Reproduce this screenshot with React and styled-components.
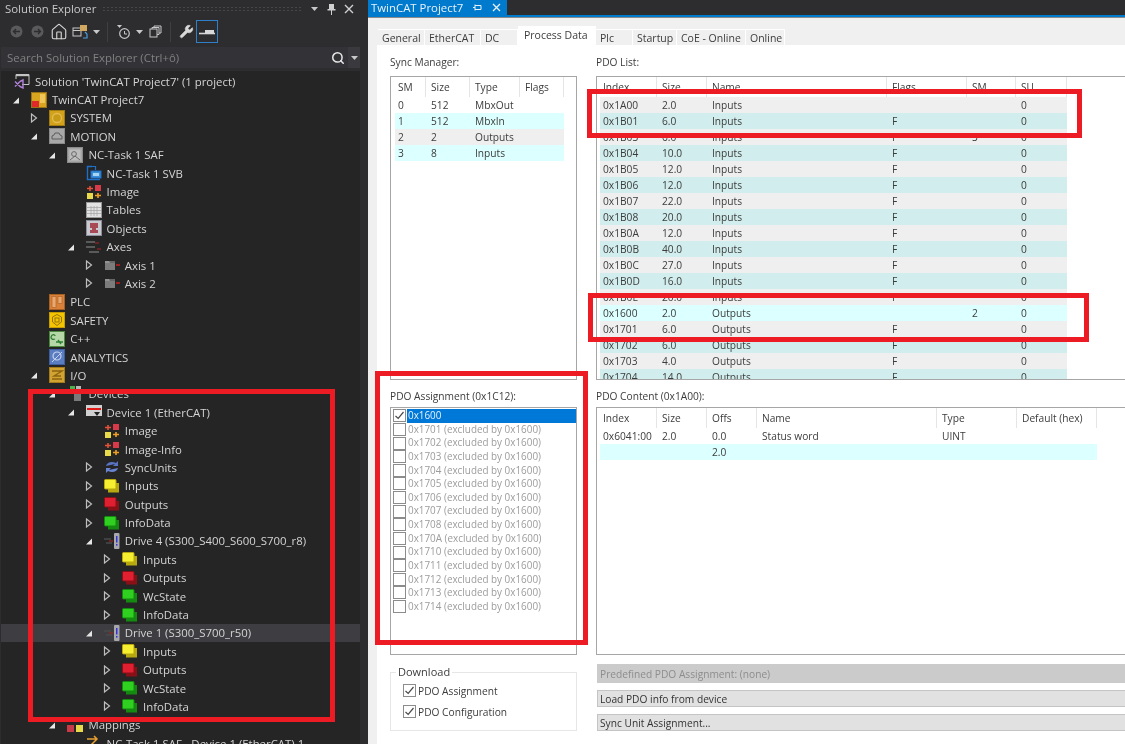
import React from "react";
import styled, { createGlobalStyle } from "styled-components";
import { House, Wrench, Search } from "lucide-react";

const Global = createGlobalStyle`
  html, body { margin: 0; padding: 0; height: 100%; background: #252526; overflow: hidden; }
  #root { height: 100%; }
  * { box-sizing: border-box; }
`;

const Page = styled.div`
  position: relative; width: 1125px; height: 744px; display: flex; overflow: hidden;
  filter: blur(0.35px);
`;

/* ---------- Left: Solution Explorer ---------- */
const Explorer = styled.aside`
  width: 368px; flex: none; display: flex; flex-direction: column; background: #2d2d30;
  font-family: "Open Sans", "Noto Sans", sans-serif; font-size: 11.4px; color: #d4d4d4;
`;
const TitleBar = styled.div`
  height: 17px; display: flex; align-items: center; padding: 0 13px 0 5px; color: #c8c8c8;
`;
const Grip = styled.div`
  flex: 1; height: 5px; margin: 0 2px 0 6px;
  background-image: radial-gradient(#47474b 0.7px, transparent 0.8px); background-size: 4px 3px;
`;
const TitleBtn = styled.span`
  width: 13px; height: 14px; display: flex; align-items: center; justify-content: center; margin-left: 4px; flex: none;
`;
const Toolbar = styled.div`
  height: 29px; display: flex; align-items: center; padding: 0 0 0 6px; background: #2d2d30;
`;
const ToolBtn = styled.div`
  width: ${p => p.$w || 21}px; height: 23px; flex: none; display: flex; align-items: center; justify-content: center;
  border: 1px solid ${p => (p.$active ? "#2f7fc9" : "transparent")};
  color: ${p => (p.$dim ? "#5a5a5c" : "#c8c8c8")};
`;
const ToolSep = styled.div`
  width: 1px; height: 20px; background: #3f3f42; margin: 0 5px 0 4px; flex: none;
`;
const SearchBar = styled.div`
  height: 21px; margin: 1px 8px 0 1px; background: #333337; display: flex; align-items: center;
  padding-left: 6px; color: #808082; flex: none;
`;
const SearchText = styled.span` flex: 1; `;
const SearchBtn = styled.span`
  width: 20px; height: 100%; display: flex; align-items: center; justify-content: center; color: #e8e8e8;
`;
const SearchCaret = styled.span`
  width: 12px; height: 100%; background: #3a3a3e; display: flex; align-items: center; justify-content: center;
`;
const Tree = styled.div`
  flex: 1; background: #252526; margin: 3px 8px 0 1px; padding-top: 1px; overflow: hidden;
  width: 359px;
`;
const Row = styled.div`
  height: 18.4px; display: flex; align-items: center; white-space: nowrap;
  padding-left: ${p => (p.$d === 0 ? 13 : 11 + (p.$d - 1) * 18.2)}px;
  background: ${p => (p.$sel ? "#3e3e42" : "transparent")};
`;
const ArrowSlot = styled.span`
  width: 19px; flex: none; display: flex; align-items: center;
`;
const IconSlot = styled.span`
  width: 16px; height: 16px; flex: none; display: block; margin-right: 5px;
`;

const Arrow = ({ open }) => (
  <svg width="8" height="10" viewBox="0 0 8 10">
    {open ? <path d="M1 8.5 L7 2.5 V8.5 Z" fill="#e6e6e6" />
      : <path d="M1.5 1 L6.5 5 L1.5 9 Z" fill="none" stroke="#bdbdbd" strokeWidth="1.2" />}
  </svg>
);

const Caret = () => (
  <svg width="7" height="4" viewBox="0 0 7 4"><path d="M0 0H7L3.5 4Z" fill="#c8c8c8" /></svg>
);

const Stack = ({ a, b }) => (
  <svg viewBox="0 0 16 16" width="16" height="16">
    <rect x="4" y="5" width="11" height="9.5" fill={b} />
    <rect x="0.5" y="1.5" width="11.5" height="9.5" rx="1" fill={a} stroke={b} strokeWidth="1" />
  </svg>
);
const Tile = ({ bg, edge, children }) => (
  <svg viewBox="0 0 16 16" width="16" height="16">
    <rect x="0.5" y="0.5" width="15" height="15" fill={bg} stroke={edge} />
    {children}
  </svg>
);
const ImageIcon = () => (
  <svg viewBox="0 0 16 16" width="16" height="16">
    <rect x="9" y="1" width="6" height="6" fill="#d83a4a" />
    <rect x="1" y="9" width="6" height="6" fill="#e8da4a" />
    <path d="M1 4.5H7M4 2V7" stroke="#e8503a" strokeWidth="1.6" />
    <path d="M9 11.5H15M12 9V14" stroke="#f0a020" strokeWidth="1.6" />
  </svg>
);

const icons = {
  solution: (
    <svg viewBox="0 0 16 16" width="16" height="16">
      <path d="M2 6V1.5H15V11.5H8" fill="none" stroke="#c4c4c4" strokeWidth="1" />
      <path d="M2 2.5H15" stroke="#c4c4c4" strokeWidth="1.4" />
      <path d="M1 8.5L6 13.5M1 13.5L6 8.5M6 8.5L9 7V15L6 13.5" fill="none" stroke="#b180d7" strokeWidth="1.4" />
    </svg>
  ),
  project: (
    <Tile bg="#d9a520" edge="#9a7414">
      <rect x="9" y="2" width="5" height="9" fill="#eec65a" />
      <rect x="1" y="9" width="7" height="6" fill="#e02a2a" />
    </Tile>
  ),
  system: (
    <Tile bg="#d3a21a" edge="#a17c10">
      <circle cx="8" cy="8" r="4.5" fill="#c79a18" stroke="#e2bd50" strokeWidth="1.3" />
    </Tile>
  ),
  motion: (
    <Tile bg="#a8a8a8" edge="#8a8a8a">
      <path d="M3 11V8L5 7L6 5H10L11 7L13 8V11Z" fill="none" stroke="#5c5c5c" strokeWidth="1" />
    </Tile>
  ),
  nc: (
    <Tile bg="#a5a5a5" edge="#8a8a8a">
      <rect x="2.5" y="2.5" width="11" height="11" fill="#bdbdbd" />
      <circle cx="7" cy="7" r="2.4" fill="none" stroke="#6a6a6a" />
      <path d="M3 13L8 9L13 13" fill="none" stroke="#6a6a6a" />
    </Tile>
  ),
  svb: (
    <svg viewBox="0 0 16 16" width="16" height="16">
      <path d="M6 1.5H1.5V14.5H14" fill="none" stroke="#1e6fc8" strokeWidth="1.4" />
      <path d="M6 1.5H9.5V5" fill="none" stroke="#1e6fc8" strokeWidth="1.2" />
      <rect x="5" y="6" width="10" height="7" fill="#3a8fd8" stroke="#1e6fc8" />
      <rect x="7" y="8" width="6" height="3" fill="#a8d4f4" />
    </svg>
  ),
  image: <ImageIcon />,
  tables: (
    <Tile bg="#e2e2e2" edge="#9a9a9a">
      <path d="M1 5.5H15M1 8.5H15M1 11.5H15M5 4V14M8 4V14M11 4V14" stroke="#a8a8a8" strokeWidth="0.8" />
    </Tile>
  ),
  objects: (
    <Tile bg="#c9c9d2" edge="#8f8f99">
      <path d="M4 3H12V8H10V10H12V13H4V10H6V8H4Z" fill="#a84a56" />
    </Tile>
  ),
  axes: (
    <svg viewBox="0 0 16 16" width="16" height="16">
      <path d="M0 3H9M0 8H9M3 13H13" stroke="#5a5a5a" strokeWidth="2" />
      <path d="M9 4H13M11 10H15" stroke="#b02020" strokeWidth="1.2" />
    </svg>
  ),
  axis: (
    <svg viewBox="0 0 16 16" width="16" height="16">
      <path d="M1 4H5L6 6H11V13H1Z" fill="#7c7c7c" />
      <path d="M1 5H11" stroke="#a8a8a8" />
      <path d="M12 8H16" stroke="#d02020" strokeWidth="1.4" />
    </svg>
  ),
  plc: (
    <Tile bg="#d9803a" edge="#a86020">
      <rect x="3" y="2.5" width="4" height="11" fill="#e8a870" stroke="#a86020" strokeWidth="0.6" />
      <rect x="9" y="2.5" width="4" height="7" fill="#e8a870" stroke="#a86020" strokeWidth="0.6" />
    </Tile>
  ),
  safety: (
    <Tile bg="#f5c400" edge="#c79c00">
      <path d="M8 2.5L12.5 5V10L8 13.5L3.5 10V5Z" fill="none" stroke="#96740a" />
      <rect x="6" y="6" width="4" height="4" fill="none" stroke="#96740a" />
    </Tile>
  ),
  cpp: (
    <Tile bg="#b6d8a8" edge="#4a8a3a">
      <path d="M2 6C3 3 6 3 6 5M2 6C2 8 4 9 6 8M7 11H14M9 9L12 13" fill="none" stroke="#2e7d32" strokeWidth="1.3" />
    </Tile>
  ),
  analytics: (
    <Tile bg="#5a7cc0" edge="#3e5ea0">
      <circle cx="8" cy="7" r="4" fill="none" stroke="#c4d2f0" strokeWidth="1.2" />
      <path d="M3 13L13 3" stroke="#c4d2f0" strokeWidth="1" />
    </Tile>
  ),
  io: (
    <Tile bg="#d2a232" edge="#a67c18">
      <path d="M3 4H13L5 9H12M3 12H13" fill="none" stroke="#8c6410" strokeWidth="1.4" />
    </Tile>
  ),
  devices: (
    <svg viewBox="0 0 16 16" width="16" height="16">
      <rect x="3" y="0" width="5" height="5" fill="#50b050" />
      <rect x="9" y="0" width="5" height="5" fill="#b8b8b8" />
      <rect x="7" y="7" width="7" height="8" fill="#7a7a7a" />
    </svg>
  ),
  device: (
    <svg viewBox="0 0 16 16" width="16" height="16">
      <rect x="0" y="1" width="16" height="11" fill="#d0d0d0" />
      <rect x="1" y="4" width="14" height="2" fill="#e01818" />
      <path d="M8 8H14L11 12Z" fill="#202020" />
    </svg>
  ),
  sync: (
    <svg viewBox="0 0 16 16" width="16" height="16">
      <path d="M2 7C3 3 8 2 12 4L14 2V7H9L11 5" fill="#5a74c4" />
      <path d="M14 9C13 13 8 14 4 12L2 14V9H7L5 11" fill="#6a84d4" />
    </svg>
  ),
  inputs: <Stack a="#f6ee30" b="#b8a810" />,
  outputs: <Stack a="#e02030" b="#8a1018" />,
  green: <Stack a="#30d020" b="#148a10" />,
  drive: (
    <svg viewBox="0 0 16 16" width="16" height="16">
      <path d="M0 6H7M2 10H8" stroke="#4a4a4a" strokeWidth="1.5" />
      <path d="M5 8H9" stroke="#a02020" strokeWidth="1.2" />
      <rect x="10" y="0" width="5.5" height="16" rx="1" fill="#a8a8ac" />
      <rect x="12.2" y="3" width="1.2" height="6.5" fill="#1818e0" />
      <rect x="12.2" y="11" width="1.2" height="1.6" fill="#1818e0" />
    </svg>
  ),
  mappings: (
    <svg viewBox="0 0 16 16" width="16" height="16">
      <path d="M2 3H6M10 3H14" stroke="#50a050" strokeWidth="2" />
      <rect x="0" y="8" width="7" height="7" fill="#c83a48" />
      <rect x="9" y="8" width="7" height="7" fill="#e8da4a" />
    </svg>
  ),
  map: (
    <svg viewBox="0 0 16 16" width="16" height="16">
      <path d="M1 4H11M8 1L11 4L8 7M15 10H5M8 7L5 10L8 13" fill="none" stroke="#e8a030" strokeWidth="1.5" />
    </svg>
  ),
};

const treeData = [
  [0, null, "solution", "Solution 'TwinCAT Project7' (1 project)"],
  [1, "o", "project", "TwinCAT Project7"],
  [2, "c", "system", "SYSTEM"],
  [2, "o", "motion", "MOTION"],
  [3, "o", "nc", "NC-Task 1 SAF"],
  [4, "", "svb", "NC-Task 1 SVB"],
  [4, "", "image", "Image"],
  [4, "", "tables", "Tables"],
  [4, "", "objects", "Objects"],
  [4, "o", "axes", "Axes"],
  [5, "c", "axis", "Axis 1"],
  [5, "c", "axis", "Axis 2"],
  [2, "", "plc", "PLC"],
  [2, "", "safety", "SAFETY"],
  [2, "", "cpp", "C++"],
  [2, "", "analytics", "ANALYTICS"],
  [2, "o", "io", "I/O"],
  [3, "o", "devices", "Devices"],
  [4, "o", "device", "Device 1 (EtherCAT)"],
  [5, "", "image", "Image"],
  [5, "", "image", "Image-Info"],
  [5, "c", "sync", "SyncUnits"],
  [5, "c", "inputs", "Inputs"],
  [5, "c", "outputs", "Outputs"],
  [5, "c", "green", "InfoData"],
  [5, "o", "drive", "Drive 4 (S300_S400_S600_S700_r8)"],
  [6, "c", "inputs", "Inputs"],
  [6, "c", "outputs", "Outputs"],
  [6, "c", "green", "WcState"],
  [6, "c", "green", "InfoData"],
  [5, "o", "drive", "Drive 1 (S300_S700_r50)", true],
  [6, "c", "inputs", "Inputs"],
  [6, "c", "outputs", "Outputs"],
  [6, "c", "green", "WcState"],
  [6, "c", "green", "InfoData"],
  [3, "o", "mappings", "Mappings"],
  [4, "", "map", "NC-Task 1 SAF - Device 1 (EtherCAT) 1"],
];

/* ---------- Right: document ---------- */
const Doc = styled.main`
  flex: 1; display: flex; flex-direction: column; min-width: 0; background: #f0f0f0;
  font-family: "Open Sans", "Noto Sans", sans-serif; font-size: 10.2px; color: #3c3c3c;
`;
const DocBar = styled.div`
  height: 15px; flex: none; background: #2d2d30; display: flex;
`;
const DocTab = styled.div`
  width: 139px; background: #007acc; color: #e8f2fa; display: flex; align-items: center;
  padding-left: 3px; font-size: 11.4px; white-space: nowrap;
`;
const DocTabIcons = styled.span`
  display: flex; align-items: center; gap: 10px; margin-left: auto; padding-right: 6px;
`;
const DocLine = styled.div`
  height: 3px; flex: none; background: #007acc; border-bottom: 1px solid #8a8a8a;
`;
const TabStrip = styled.div`
  display: flex; align-items: flex-end; height: 27px; flex: none; padding-left: 9px; border-left: 1px solid #f0f0f0;
`;
const Tab = styled.div`
  height: ${p => (p.$active ? 19 : 16)}px; width: ${p => p.$w}px; flex: none; display: flex; align-items: center;
  padding-left: ${p => (p.$active ? 6 : 4)}px; white-space: nowrap; font-size: 10.5px;
  background: ${p => (p.$active ? "#fff" : "#f0f0f0")}; border-right: 1px solid #fff; border-top: 1px solid #fff;
  padding-bottom: ${p => (p.$active ? 2 : 0)}px;
`;
const TabPage = styled.div`
  flex: 1; margin-left: 9px; background: #fff; padding: 10px 0 0 13px; display: grid;
  grid-template-columns: 187px 1fr; grid-template-rows: 325px 266px 67px; column-gap: 19px; row-gap: 9px; min-height: 0;
`;
const Section = styled.section`
  display: flex; flex-direction: column; min-width: 0; min-height: 0;
`;
const Label = styled.div`
  height: ${p => p.$h}px; flex: none; line-height: 14px; white-space: nowrap;
`;
const Box = styled.div`
  flex: 1; min-height: 0; overflow: hidden; border: 1px solid #a6a6a6; padding-left: ${p => p.$pad ?? 3}px;
  padding-top: ${p => p.$top || 0}px;
  border-right: ${p => (p.$open ? "none" : "1px solid #a6a6a6")};
`;
const THead = styled.div`
  display: grid; grid-template-columns: ${p => p.$cols}; height: 20px; align-items: center;
  width: max-content;
`;
const Th = styled.div`
  height: 20px; line-height: 20px; padding-left: 5px; border-right: 1px solid #e5e5e5; color: #3c3c3c;
  &:first-child { padding-left: 3px; }
`;
const TRow = styled.div`
  display: grid; grid-template-columns: ${p => p.$cols}; height: 16px; align-items: center; width: max-content;
  background: ${p => ({ g: "#efefef", t: "#d2eded", c: "#dcffff" }[p.$tone] || "#fff")};
`;
const Td = styled.div`
  line-height: 16px; padding-left: 5px; white-space: nowrap;
  &:first-child { padding-left: 3px; }
`;
const AssignItem = styled.div`
  height: 13.64px; display: flex; align-items: center; padding-left: 2px; white-space: nowrap; font-size: 9.9px;
`;
const Check = styled.span`
  width: 13px; height: 13px; flex: none; border: 1px solid #8c8c8c; background: #fff; display: flex;
  align-items: center; justify-content: center;
`;
const ItemText = styled.span`
  margin-left: 1px; flex: 1; height: 13.64px; line-height: 13.64px; padding-left: 1px;
  background: ${p => (p.$sel ? "#0078d7" : "transparent")};
  color: ${p => (p.$sel ? "#e6f2fb" : "#9c9c9c")};
`;
const Group = styled.fieldset`
  margin: 1px 0 0; padding: 1px 0 0 12px; height: 66px; border: 1px solid #e6e6e6; min-width: 0;
`;
const Legend = styled.legend`
  padding: 0 2px; margin-left: -7px; line-height: 14px; font-size: 11px;
`;
const GroupRow = styled.div`
  height: 21px; display: flex; align-items: center; gap: 2px;
`;
const Buttons = styled.div`
  display: flex; flex-direction: column; gap: 7px; margin-left: 1px;
`;
const Button = styled.div`
  height: ${p => (p.$off ? 19 : 17)}px; display: flex; align-items: center; padding-left: 2px; white-space: nowrap;
  background: ${p => (p.$off ? "#cbcbcb" : "#e1e1e1")}; color: ${p => (p.$off ? "#8d8d8d" : "#333")};
  border: 1px solid ${p => (p.$off ? "#cbcbcb" : "#c4c4c4")}; border-right: none;
`;
const RedBox = styled.div`
  position: absolute; pointer-events: none; border: 5px solid #ed1c24;
  left: ${p => p.$x}px; top: ${p => p.$y}px; width: ${p => p.$w}px; height: ${p => p.$h}px;
`;

const tick = (
  <svg width="11" height="11" viewBox="0 0 11 11"><path d="M1.5 6L4.2 8.5L9.5 2" fill="none" stroke="#4a4a4a" strokeWidth="1.2" /></svg>
);

const syncCols = "31px 44px 50px 44px";
const pdoCols = "57px 50px 180px 80px 49px 51px";
const contentCols = "57px 50px 50px 180px 80px 80px";

const pdo = [
  ["0x1A00", "2.0", "Inputs", "", "", "0", "g"],
  ["0x1B01", "6.0", "Inputs", "F", "", "0", "t"],
  ["0x1B03", "6.0", "Inputs", "F", "3", "0", "g"],
  ["0x1B04", "10.0", "Inputs", "F", "", "0", "t"],
  ["0x1B05", "12.0", "Inputs", "F", "", "0", "g"],
  ["0x1B06", "12.0", "Inputs", "F", "", "0", "t"],
  ["0x1B07", "22.0", "Inputs", "F", "", "0", "g"],
  ["0x1B08", "20.0", "Inputs", "F", "", "0", "t"],
  ["0x1B0A", "12.0", "Inputs", "F", "", "0", "g"],
  ["0x1B0B", "40.0", "Inputs", "F", "", "0", "t"],
  ["0x1B0C", "27.0", "Inputs", "F", "", "0", "g"],
  ["0x1B0D", "16.0", "Inputs", "F", "", "0", "t"],
  ["0x1B0E", "20.0", "Inputs", "F", "", "0", "g"],
  ["0x1600", "2.0", "Outputs", "", "2", "0", "c"],
  ["0x1701", "6.0", "Outputs", "F", "", "0", "g"],
  ["0x1702", "6.0", "Outputs", "F", "", "0", "t"],
  ["0x1703", "4.0", "Outputs", "F", "", "0", "g"],
  ["0x1704", "14.0", "Outputs", "F", "", "0", "t"],
];

const assign = ["0x1701","0x1702","0x1703","0x1704","0x1705","0x1706","0x1707","0x1708","0x170A","0x1710","0x1711","0x1712","0x1713","0x1714"];
const tabs = [["General",47],["EtherCAT",56],["DC",37],["Process Data",78,true],["Plc",37],["Startup",44],["CoE - Online",69],["Online",39]];

export default function App() {
  return (
    <Page>
      <Global />
      <Explorer>
        <TitleBar>
          Solution Explorer
          <Grip />
          <TitleBtn><Caret /></TitleBtn>
          <TitleBtn>
            <svg width="9" height="12" viewBox="0 0 9 12"><path d="M2 1H7V6H8.5V7.5H5V12H4V7.5H.5V6H2Z" fill="#d0d0d0" /></svg>
          </TitleBtn>
          <TitleBtn>
            <svg width="10" height="10" viewBox="0 0 10 10"><path d="M1 1L9 9M9 1L1 9" stroke="#d0d0d0" strokeWidth="1.4" /></svg>
          </TitleBtn>
        </TitleBar>
        <Toolbar>
          <ToolBtn $dim>
            <svg width="13" height="13" viewBox="0 0 13 13"><circle cx="6.5" cy="6.5" r="6" fill="#5a5a5c" /><path d="M10 6.5H4M6 4L3.5 6.5L6 9" fill="none" stroke="#2d2d30" strokeWidth="1.4" /></svg>
          </ToolBtn>
          <ToolBtn $dim>
            <svg width="13" height="13" viewBox="0 0 13 13"><circle cx="6.5" cy="6.5" r="6" fill="#5a5a5c" /><path d="M3 6.5H9M7 4L9.5 6.5L7 9" fill="none" stroke="#2d2d30" strokeWidth="1.4" /></svg>
          </ToolBtn>
          <ToolBtn><House size={18} strokeWidth={1.5} color="#d8d8d8" /></ToolBtn>
          <ToolBtn>
            <svg width="16" height="16" viewBox="0 0 16 16">
              <rect x="1" y="4" width="8" height="8" fill="none" stroke="#c8c8c8" />
              <path d="M1 6.5H9" stroke="#c8c8c8" />
              <rect x="8" y="1" width="7" height="6" fill="#d0a860" />
              <path d="M11 14H15V10M13 8L15 10" fill="none" stroke="#4aa0e0" strokeWidth="1.2" />
            </svg>
          </ToolBtn>
          <ToolBtn $w={13}><Caret /></ToolBtn>
          <ToolSep />
          <ToolBtn>
            <svg width="16" height="16" viewBox="0 0 16 16">
              <circle cx="8.5" cy="9.5" r="4.8" fill="none" stroke="#c8c8c8" strokeWidth="1.2" />
              <path d="M8.5 7V10H11" fill="none" stroke="#c8c8c8" />
              <path d="M1 1H6L3.5 4Z" fill="#c8c8c8" />
            </svg>
          </ToolBtn>
          <ToolBtn $w={11}><Caret /></ToolBtn>
          <ToolBtn>
            <svg width="13" height="13" viewBox="0 0 13 13">
              <rect x="1" y="4" width="7" height="8" fill="#2d2d30" stroke="#c8c8c8" />
              <path d="M3 4V2.5H10V9.5H8M5 2.5V1H12V8H10" fill="none" stroke="#c8c8c8" />
            </svg>
          </ToolBtn>
          <ToolSep />
          <ToolBtn $w={20}><Wrench size={15} fill="#d8d8d8" color="#d8d8d8" strokeWidth={1} /></ToolBtn>
          <ToolBtn $active $w={22}>
            <svg width="16" height="6" viewBox="0 0 16 6"><path d="M0 4.5H16" stroke="#d8d8d8" strokeWidth="1.6" /><rect x="6" y="1" width="9" height="3.5" fill="#d8d8d8" /></svg>
          </ToolBtn>
        </Toolbar>
        <SearchBar>
          <SearchText>Search Solution Explorer (Ctrl+ô)</SearchText>
          <SearchBtn><Search size={14} strokeWidth={2.6} /></SearchBtn>
          <SearchCaret><Caret /></SearchCaret>
        </SearchBar>
        <Tree>
          {treeData.map(([d, arrow, icon, label, sel], i) => (
            <Row key={i} $d={d} $sel={sel}>
              {d > 0 && <ArrowSlot>{arrow && <Arrow open={arrow === "o"} />}</ArrowSlot>}
              <IconSlot>{icons[icon]}</IconSlot>
              {label}
            </Row>
          ))}
        </Tree>
      </Explorer>

      <Doc>
        <DocBar>
          <DocTab>
            TwinCAT Project7
            <DocTabIcons>
              <svg width="9" height="9" viewBox="0 0 9 9"><path d="M0 4.5H2M2 1.5V7.5M2 2.5H8V6.5H2" fill="none" stroke="#e8f2fa" /></svg>
              <svg width="9" height="9" viewBox="0 0 9 9"><path d="M1 1L8 8M8 1L1 8" stroke="#e8f2fa" strokeWidth="1.3" /></svg>
            </DocTabIcons>
          </DocTab>
        </DocBar>
        <DocLine />
        <TabStrip>
          {tabs.map(([t, w, a]) => <Tab key={t} $w={w} $active={a}>{t}</Tab>)}
        </TabStrip>
        <TabPage>
          <Section>
            <Label $h={21}>Sync Manager:</Label>
            <Box $pad={4}>
              <THead $cols={syncCols}>{["SM","Size","Type","Flags"].map(h => <Th key={h}>{h}</Th>)}</THead>
              {[["0","512","MbxOut",""],["1","512","MbxIn","c"],["2","2","Outputs","g"],["3","8","Inputs","c"]].map(r => (
                <TRow key={r[0]} $cols={syncCols} $tone={r[3]}>
                  <Td>{r[0]}</Td><Td>{r[1]}</Td><Td>{r[2]}</Td><Td />
                </TRow>
              ))}
            </Box>
          </Section>
          <Section>
            <Label $h={21}>PDO List:</Label>
            <Box $open>
              <THead $cols={pdoCols}>{["Index","Size","Name","Flags","SM","SU"].map(h => <Th key={h}>{h}</Th>)}</THead>
              {pdo.map(r => (
                <TRow key={r[0]} $cols={pdoCols} $tone={r[6]}>
                  {r.slice(0, 6).map((c, i) => <Td key={i}>{c}</Td>)}
                </TRow>
              ))}
            </Box>
          </Section>
          <Section>
            <Label $h={18}>PDO Assignment (0x1C12):</Label>
            <Box $pad={0} $top={1}>
              <AssignItem>
                <Check>{tick}</Check>
                <ItemText $sel>0x1600</ItemText>
              </AssignItem>
              {assign.map(a => (
                <AssignItem key={a}>
                  <Check />
                  <ItemText>{a} (excluded by 0x1600)</ItemText>
                </AssignItem>
              ))}
            </Box>
          </Section>
          <Section>
            <Label $h={18}>PDO Content (0x1A00):</Label>
            <Box $open>
              <THead $cols={contentCols}>{["Index","Size","Offs","Name","Type","Default (hex)"].map(h => <Th key={h}>{h}</Th>)}</THead>
              <TRow $cols={contentCols}><Td>0x6041:00</Td><Td>2.0</Td><Td>0.0</Td><Td>Status word</Td><Td>UINT</Td><Td /></TRow>
              <TRow $cols={contentCols} $tone="c"><Td /><Td /><Td>2.0</Td><Td /><Td /><Td /></TRow>
            </Box>
          </Section>
          <Section>
            <Group>
              <Legend>Download</Legend>
              <GroupRow><Check>{tick}</Check>PDO Assignment</GroupRow>
              <GroupRow><Check>{tick}</Check>PDO Configuration</GroupRow>
            </Group>
          </Section>
          <Buttons>
            <Button $off>Predefined PDO Assignment: (none)</Button>
            <Button>Load PDO info from device</Button>
            <Button>Sync Unit Assignment...</Button>
          </Buttons>
        </TabPage>
      </Doc>

      <RedBox $x={587} $y={89} $w={495} $h={49} />
      <RedBox $x={588} $y={293} $w={501} $h={49} />
      <RedBox $x={375} $y={371} $w={213} $h={274} />
      <RedBox $x={28} $y={389} $w={307} $h={333} />
    </Page>
  );
}
